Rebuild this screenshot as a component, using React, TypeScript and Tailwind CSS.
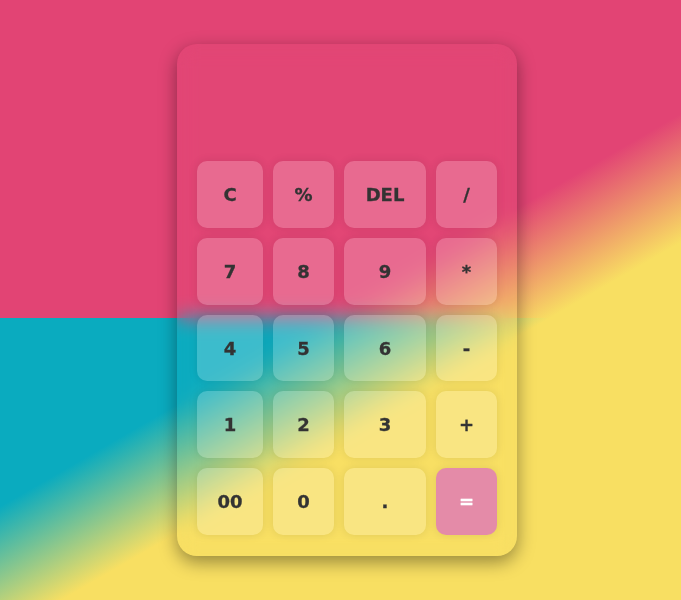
import React from "react";

const keys: { label: string; eq?: boolean }[] = [
  { label: "C" },
  { label: "%" },
  { label: "DEL" },
  { label: "/" },
  { label: "7" },
  { label: "8" },
  { label: "9" },
  { label: "*" },
  { label: "4" },
  { label: "5" },
  { label: "6" },
  { label: "-" },
  { label: "1" },
  { label: "2" },
  { label: "3" },
  { label: "+" },
  { label: "00" },
  { label: "0" },
  { label: "." },
  { label: "=", eq: true },
];

export default function App() {
  return (
    <div
      className="w-full h-[600px] flex justify-center pt-[44px] pl-[13px] bg-[linear-gradient(150deg,transparent_51%,#f8df62_64%),linear-gradient(to_bottom,#e24474_318px,#0aabbf_318px)]"
      style={{ fontFamily: '"DejaVu Sans", Verdana, sans-serif' }}
    >
      <div className="w-[340px] h-[512px] rounded-[20px] backdrop-blur-[10px] bg-white/[0.01] shadow-[0_6px_18px_rgba(0,0,0,0.4)] flex flex-col justify-end px-5 pb-[21px]">
        <div className="grid grid-cols-[66px_61px_82px_61px] auto-rows-[66.8px] gap-x-[10px] gap-y-[10px]">
          {keys.map((k) => (
            <button
              key={k.label}
              className={
                k.eq
                  ? "rounded-[10px] bg-[#e48ba8] text-white text-[18px] font-bold [-webkit-text-stroke:0.3px_#fff] flex items-center justify-center shadow-[0_0_10px_rgba(0,0,0,0.1)]"
                  : "rounded-[10px] bg-white/20 text-[#333] text-[18px] font-bold [-webkit-text-stroke:0.3px_#333] flex items-center justify-center shadow-[0_0_10px_rgba(0,0,0,0.1)]"
              }
            >
              {k.label}
            </button>
          ))}
        </div>
      </div>
    </div>
  );
}
